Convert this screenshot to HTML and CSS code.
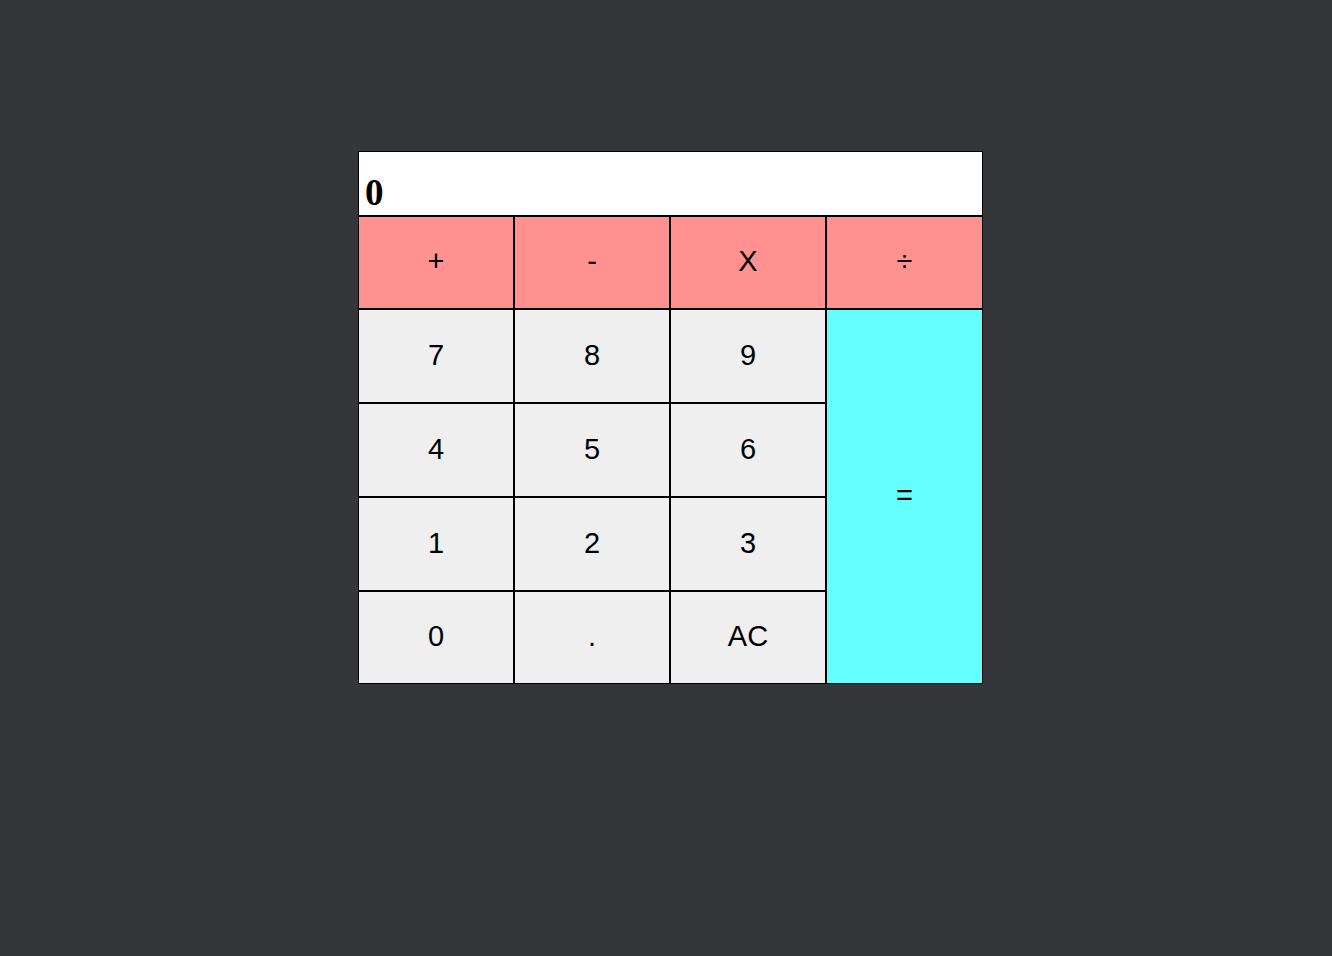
FILE: index.html
```html
<!DOCTYPE html>
<html>
<head>
<meta charset="utf-8">
<title>Calculator</title>
<link rel="stylesheet" href="styles.css">
</head>
<body>
<div class="calc">
  <div class="display">0</div>
  <button class="key op">+</button>
  <button class="key op">-</button>
  <button class="key op">X</button>
  <button class="key op">÷</button>
  <button class="key">7</button>
  <button class="key">8</button>
  <button class="key">9</button>
  <button class="key eq">=</button>
  <button class="key">4</button>
  <button class="key">5</button>
  <button class="key">6</button>
  <button class="key">1</button>
  <button class="key">2</button>
  <button class="key">3</button>
  <button class="key">0</button>
  <button class="key">.</button>
  <button class="key">AC</button>
</div>
</body>
</html>
```
FILE: styles.css
```css
html, body {
  margin: 0;
  padding: 0;
  background: #35363a;
  height: 100%;
}

.calc {
  margin: 151px 0 0 358px;
  width: 625px;
  display: grid;
  grid-template-columns: 156px 156px 156px 157px;
  grid-template-rows: 65px 93px 94px 94px 94px 93px;
}

.display {
  grid-column: 1 / 5;
  box-sizing: border-box;
  border: 1px solid #000;
  background: #fff;
  display: flex;
  align-items: flex-end;
  padding: 0 6px 1px 6px;
  font-family: "Liberation Serif", serif;
  font-weight: bold;
  font-size: 37px;
  line-height: 42px;
  color: #000;
}

.key {
  box-sizing: border-box;
  margin: 0;
  padding: 0 0 2px 0;
  border: 1px solid #000;
  border-radius: 0;
  background: #efefef;
  color: #000;
  font-family: "Liberation Sans", Arial, sans-serif;
  font-size: 29px;
}

.op {
  background: #ff9191;
}

.eq {
  grid-column: 4;
  grid-row: 3 / 7;
  background: #66ffff;
}
```
